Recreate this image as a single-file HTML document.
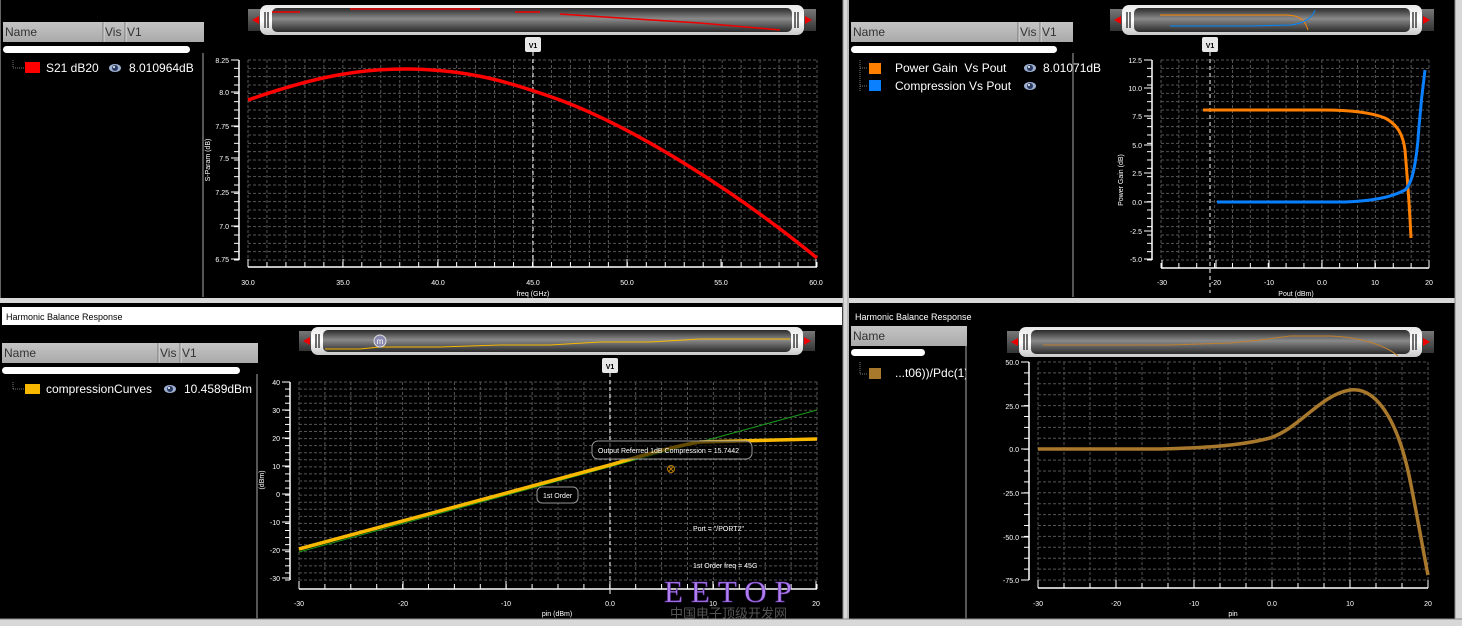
<!DOCTYPE html>
<html><head><meta charset="utf-8">
<style>
html,body{margin:0;padding:0;background:#000;width:1462px;height:626px;overflow:hidden}
svg{display:block}
text{font-family:"Liberation Sans","Noto Sans CJK SC",sans-serif}
.ui{font-size:12px;fill:#fff}
.hd{font-size:12px;fill:#333}
.ax{font-size:7px;fill:#fff}
.tt{font-size:9px;fill:#000}
</style></head><body>
<svg id="s" width="1462" height="626" viewBox="0 0 1462 626" xmlns="http://www.w3.org/2000/svg">
<defs>
<linearGradient id="hdr" x1="0" y1="0" x2="0" y2="1"><stop offset="0" stop-color="#c4c4c4"/><stop offset="1" stop-color="#aaaaaa"/></linearGradient>
<linearGradient id="so" x1="0" y1="0" x2="0" y2="1"><stop offset="0" stop-color="#e8e8e8"/><stop offset=".5" stop-color="#ffffff"/><stop offset="1" stop-color="#c8c8c8"/></linearGradient>
<linearGradient id="si" x1="0" y1="0" x2="0" y2="1"><stop offset="0" stop-color="#2a2a2a"/><stop offset=".45" stop-color="#8a8a8a"/><stop offset="1" stop-color="#2a2a2a"/></linearGradient>
<linearGradient id="cap" x1="0" y1="0" x2="0" y2="1"><stop offset="0" stop-color="#777"/><stop offset="1" stop-color="#333"/></linearGradient>
</defs>
<g id="g"></g>
</svg>
<script>
var g=document.getElementById('g'),o='';
function R(x,y,w,h,f,ex){o+='<rect x="'+x+'" y="'+y+'" width="'+w+'" height="'+h+'" fill="'+f+'" '+(ex||'')+'/>';}
function L(x1,y1,x2,y2,c,ex){o+='<line x1="'+x1+'" y1="'+y1+'" x2="'+x2+'" y2="'+y2+'" stroke="'+c+'" '+(ex||'')+'/>';}
function T(x,y,s,c,ex){o+='<text x="'+x+'" y="'+y+'" class="'+c+'" '+(ex||'')+'>'+s+'</text>';}
function P(d,c,w){o+='<path d="'+d+'" fill="none" stroke="'+c+'" stroke-width="'+w+'" stroke-linejoin="round"/>';}
function eye(x,y){o+='<ellipse cx="'+x+'" cy="'+y+'" rx="6" ry="4" fill="#9db0d0"/><ellipse cx="'+x+'" cy="'+y+'" rx="3" ry="3" fill="#2a3a60"/><circle cx="'+(x-1)+'" cy="'+(y-1)+'" r="1" fill="#fff"/>';}
function header(x,y,w,cols){R(x,y,w,20,'url(#hdr)');T(x+2,y+14,'Name','hd');
 cols.forEach(function(c){L(c[0],y,c[0],y+20,'#777');L(c[0]+1,y,c[0]+1,y+20,'#ddd');T(c[0]+2,y+14,c[1],'hd');});}
function pill(x1,x2,y){R(x1,y,x2-x1,7,'#fff','rx="3.5"');}
function scroller(x,y,w,h){
 R(x,y+4,16,h-8,'url(#cap)');o+='<path d="M'+(x+4)+' '+(y+h/2)+' l7 -4 v8z" fill="#e00"/>';
 R(x+w-16,y+4,16,h-8,'url(#cap)');o+='<path d="M'+(x+w-4)+' '+(y+h/2)+' l-7 -4 v8z" fill="#e00"/>';
 R(x+12,y,w-24,h,'url(#so)','rx="7"');
 R(x+24,y+3,w-48,h-6,'url(#si)','rx="5"');
 L(x+17,y+7,x+17,y+h-7,'#111','stroke-width="1.2"');L(x+20,y+7,x+20,y+h-7,'#111','stroke-width="1.2"');
 L(x+w-21,y+7,x+w-21,y+h-7,'#111','stroke-width="1.2"');L(x+w-18,y+7,x+w-18,y+h-7,'#111','stroke-width="1.2"');}
function v1(x,y,yb){L(x,y+15,x,yb,'#fff','stroke-dasharray="4 3"');R(x-8,y,16,15,'#e8e8e8','rx="2"');T(x,y+11,'V1','ax','text-anchor="middle" style="fill:#000;font-size:7px;font-weight:bold"');}
function grid(x0,y0,x1,y1,nx,ny){
 for(var i=0;i<=nx;i++){var x=x0+(x1-x0)*i/nx;L(x,y0,x,y1,'#555','stroke-dasharray="3 2"');}
 for(var j=0;j<=ny;j++){var y=y0+(y1-y0)*j/ny;L(x0,y,x1,y,'#555','stroke-dasharray="3 2"');}}
function yaxis(ax,y0,y1,labels,nt){L(ax,y0,ax,y1,'#fff','stroke-width="1.5"');
 for(var i=0;i<=nt;i++){var y=y0+(y1-y0)*i/nt;L(ax-5,y,ax,y,'#fff');}
 labels.forEach(function(l){L(ax-8,l[1],ax,l[1],'#fff');T(ax-10,l[1]+3,l[0],'ax','text-anchor="end"');});}
function xaxis(ay,x0,x1,labels,nt,ly){L(x0,ay,x1,ay,'#fff','stroke-width="1.5"');
 for(var i=0;i<=nt;i++){var x=x0+(x1-x0)*i/nt;L(x,ay,x,ay-5,'#fff');}
 labels.forEach(function(l){L(l[1],ay,l[1],ay-8,'#fff');T(l[1],ly,l[0],'ax','text-anchor="middle"');});}

/* frames */
R(843,0,6,626,'#d8d8d8');L(843,0,843,626,'#888');L(848,0,848,626,'#999');
R(0,298,843,5,'#d8d8d8');R(849,298,613,5,'#d8d8d8');
R(1455,0,7,626,'#d8d8d8');L(1455,0,1455,626,'#888');
R(0,619,1462,7,'#d8d8d8');L(0,619,1462,619,'#888');
R(0,0,1,298,'#666');

/* ===== Top-left ===== */
header(3,22,201,[[103,'Vis'],[125,'V1']]);pill(3,190,46);
L(203,53,203,297,'#555','stroke-width="2"');
L(13,60,13,68,'#777','stroke-dasharray="1 1"');L(13,68,24,68,'#777','stroke-dasharray="1 1"');
R(25,62,15,11,'#f00');T(46,72,'S21 dB20','ui');eye(115,68);T(129,72,'8.010964dB','ui');
scroller(248,5,568,30);
o+='<path d="M272 12 H300 M350 9 H480 M515 12 H540 M560 14 L620 18 L700 23 L780 30" stroke="#e00" stroke-width="1.5" fill="none"/>';
grid(248,60,817,260,30,24);
yaxis(239,60,260,[['8.25',60],['8.0',92],['7.75',126],['7.5',158],['7.25',192],['7.0',226],['6.75',259]],24);
xaxis(267,248,817,[['30.0',248],['35.0',343],['40.0',438],['45.0',533],['50.0',627],['55.0',721],['60.0',816]],30,285);
T(533,296,'freq (GHz)','ax','text-anchor="middle"');
T(210,160,'S-Param (dB)','ax','text-anchor="middle" transform="rotate(-90 210 160)"');
v1(533,37,260);
P('M248 100 C300 82 350 68 410 69 C470 70 510 82 560 100 C640 130 740 195 817 258','#f00',3.5);

/* ===== Top-right ===== */
header(851,22,222,[[1018,'Vis'],[1040,'V1']]);pill(851,1057,46);
L(1073,53,1073,297,'#555','stroke-width="2"');
L(860,60,860,92,'#777','stroke-dasharray="1 1"');L(860,68,868,68,'#777','stroke-dasharray="1 1"');L(860,86,868,86,'#777','stroke-dasharray="1 1"');
R(869,63,12,11,'#ff8000');T(895,72,'Power Gain&#160; Vs Pout','ui');eye(1030,68);T(1043,72,'8.01071dB','ui');
R(869,80,12,11,'#0a80ff');T(895,90,'Compression Vs Pout','ui');eye(1030,86);
scroller(1110,5,324,30);
o+='<path d="M1160 15 H1285 C1300 15 1305 20 1308 30" stroke="#f80" stroke-width="1" fill="none"/><path d="M1170 26 H1250 L1290 25 C1300 24 1312 20 1315 10" stroke="#08f" stroke-width="1" fill="none"/>';
grid(1161,60,1429,260,15,24);
yaxis(1152,60,260,[['12.5',60],['10.0',88],['7.5',116],['5.0',145],['2.5',173],['0.0',202],['-2.5',231],['-5.0',259]],24);
xaxis(268,1161,1429,[['-30',1162],['-20',1216],['-10',1269],['0.0',1322],['10',1375],['20',1429]],15,285);
T(1296,296,'Pout (dBm)','ax','text-anchor="middle"');
T(1123,180,'Power Gain (dB)','ax','text-anchor="middle" transform="rotate(-90 1123 180)"');
v1(1210,37,293);
P('M1203 110 H1323 C1345 110 1370 112 1385 118 C1398 125 1403 135 1405 150 C1407 175 1409 195 1411 238','#ff8000',3);
P('M1217 202 H1345 C1370 201 1390 198 1405 190 C1413 183 1416 160 1418 140 C1420 110 1423 85 1425 70','#0a80ff',3);

/* ===== Bottom-left ===== */
R(2,307,840,18,'#fff');T(6,320,'Harmonic Balance Response','tt');
header(2,343,256,[[158,'Vis'],[180,'V1']]);pill(2,240,367);
L(257,374,257,619,'#555','stroke-width="2"');
L(13,382,13,389,'#777','stroke-dasharray="1 1"');L(13,389,24,389,'#777','stroke-dasharray="1 1"');
R(25,384,15,10,'#f8b800');T(46,393,'compressionCurves','ui');eye(170,389);T(184,393,'10.4589dBm','ui');
scroller(299,327,516,28);
o+='<path d="M325 349 H360 L380 347 H440 L500 345 H550 L600 342 H650 L700 339 H790" stroke="#f8b800" stroke-width="1" fill="none"/>';
o+='<circle cx="380" cy="341" r="6" fill="#8a8ab0" stroke="#ddd"/><text x="380" y="344" font-size="8" fill="#fff" text-anchor="middle">m</text>';
grid(299,382,817,580,20,28);
yaxis(290,382,580,[['40',382],['30',410],['20',438],['10',466],['0',494],['-10',522],['-20',550],['-30',578]],28);
xaxis(589,299,817,[['-30',299],['-20',403],['-10',506],['0.0',610],['10',713],['20',816]],20,606);
T(557,616,'pin (dBm)','ax','text-anchor="middle"');
T(264,480,'(dBm)','ax','text-anchor="middle" transform="rotate(-90 264 480)"');
v1(610,358,595);
P('M299 552 L817 410','#1a9a1a',1);
P('M299 549 L610 465 C650 453 680 445 700 442 L817 439','#f8b800',3.5);
R(592,441,160,18,'#000','rx="6" stroke="#999" fill-opacity="0.6"');T(598,453,'Output Referred 1dB Compression = 15.7442','ax');
o+='<circle cx="671" cy="469" r="3.5" fill="none" stroke="#c08000"/><path d="M669 467 l4 4 m0 -4 l-4 4" stroke="#c08000"/>';
R(537,487,41,16,'#000','rx="5" stroke="#999"');T(543,498,'1st Order','ax');
T(693,531,'Port = "/PORT2"','ax');T(693,568,'1st Order freq = 45G','ax');
T(664,602,'EETOP','','style="font-family:Liberation Serif,serif;font-size:31px;fill:#b080f0;letter-spacing:8px;stroke:#6030a0;stroke-width:0.6"');
T(670,618,'中国电子顶级开发网','','style="font-family:Liberation Sans,Noto Sans CJK SC,sans-serif;font-size:13px;fill:#555"');

/* ===== Bottom-right ===== */
T(855,320,'Harmonic Balance Response','tt','style="fill:#fff"');
R(851,326,116,20,'url(#hdr)');T(853,340,'Name','hd');pill(851,925,349);
L(966,346,966,619,'#555','stroke-width="2"');
L(860,362,860,374,'#777','stroke-dasharray="1 1"');L(860,374,868,374,'#777','stroke-dasharray="1 1"');
R(869,368,12,11,'#a8782c');
o+='<svg x="893" y="360" width="73" height="24"><text x="2" y="17" class="ui">...t06))/Pdc(1)&#160; hb</text></svg>';
scroller(1007,327,427,30);
o+='<path d="M1043 345 H1170 L1230 343 L1260 340 L1290 336 H1330 C1360 337 1385 345 1398 356" stroke="#c08030" stroke-width="1" fill="none"/>';
grid(1038,362,1428,580,15,20);
yaxis(1029,362,580,[['50.0',362],['25.0',406],['0.0',449],['-25.0',493],['-50.0',537],['-75.0',580]],20);
xaxis(588,1038,1428,[['-30',1038],['-20',1116],['-10',1194],['0.0',1272],['10',1350],['20',1428]],15,606);
T(1233,616,'pin','ax','text-anchor="middle"');
P('M1038 449 H1160 C1200 448 1240 446 1270 438 C1300 428 1320 395 1350 390 C1380 386 1400 430 1410 480 C1418 520 1423 550 1428 575','#a8782c',3.5);

g.innerHTML=o;
</script>
</body></html>
